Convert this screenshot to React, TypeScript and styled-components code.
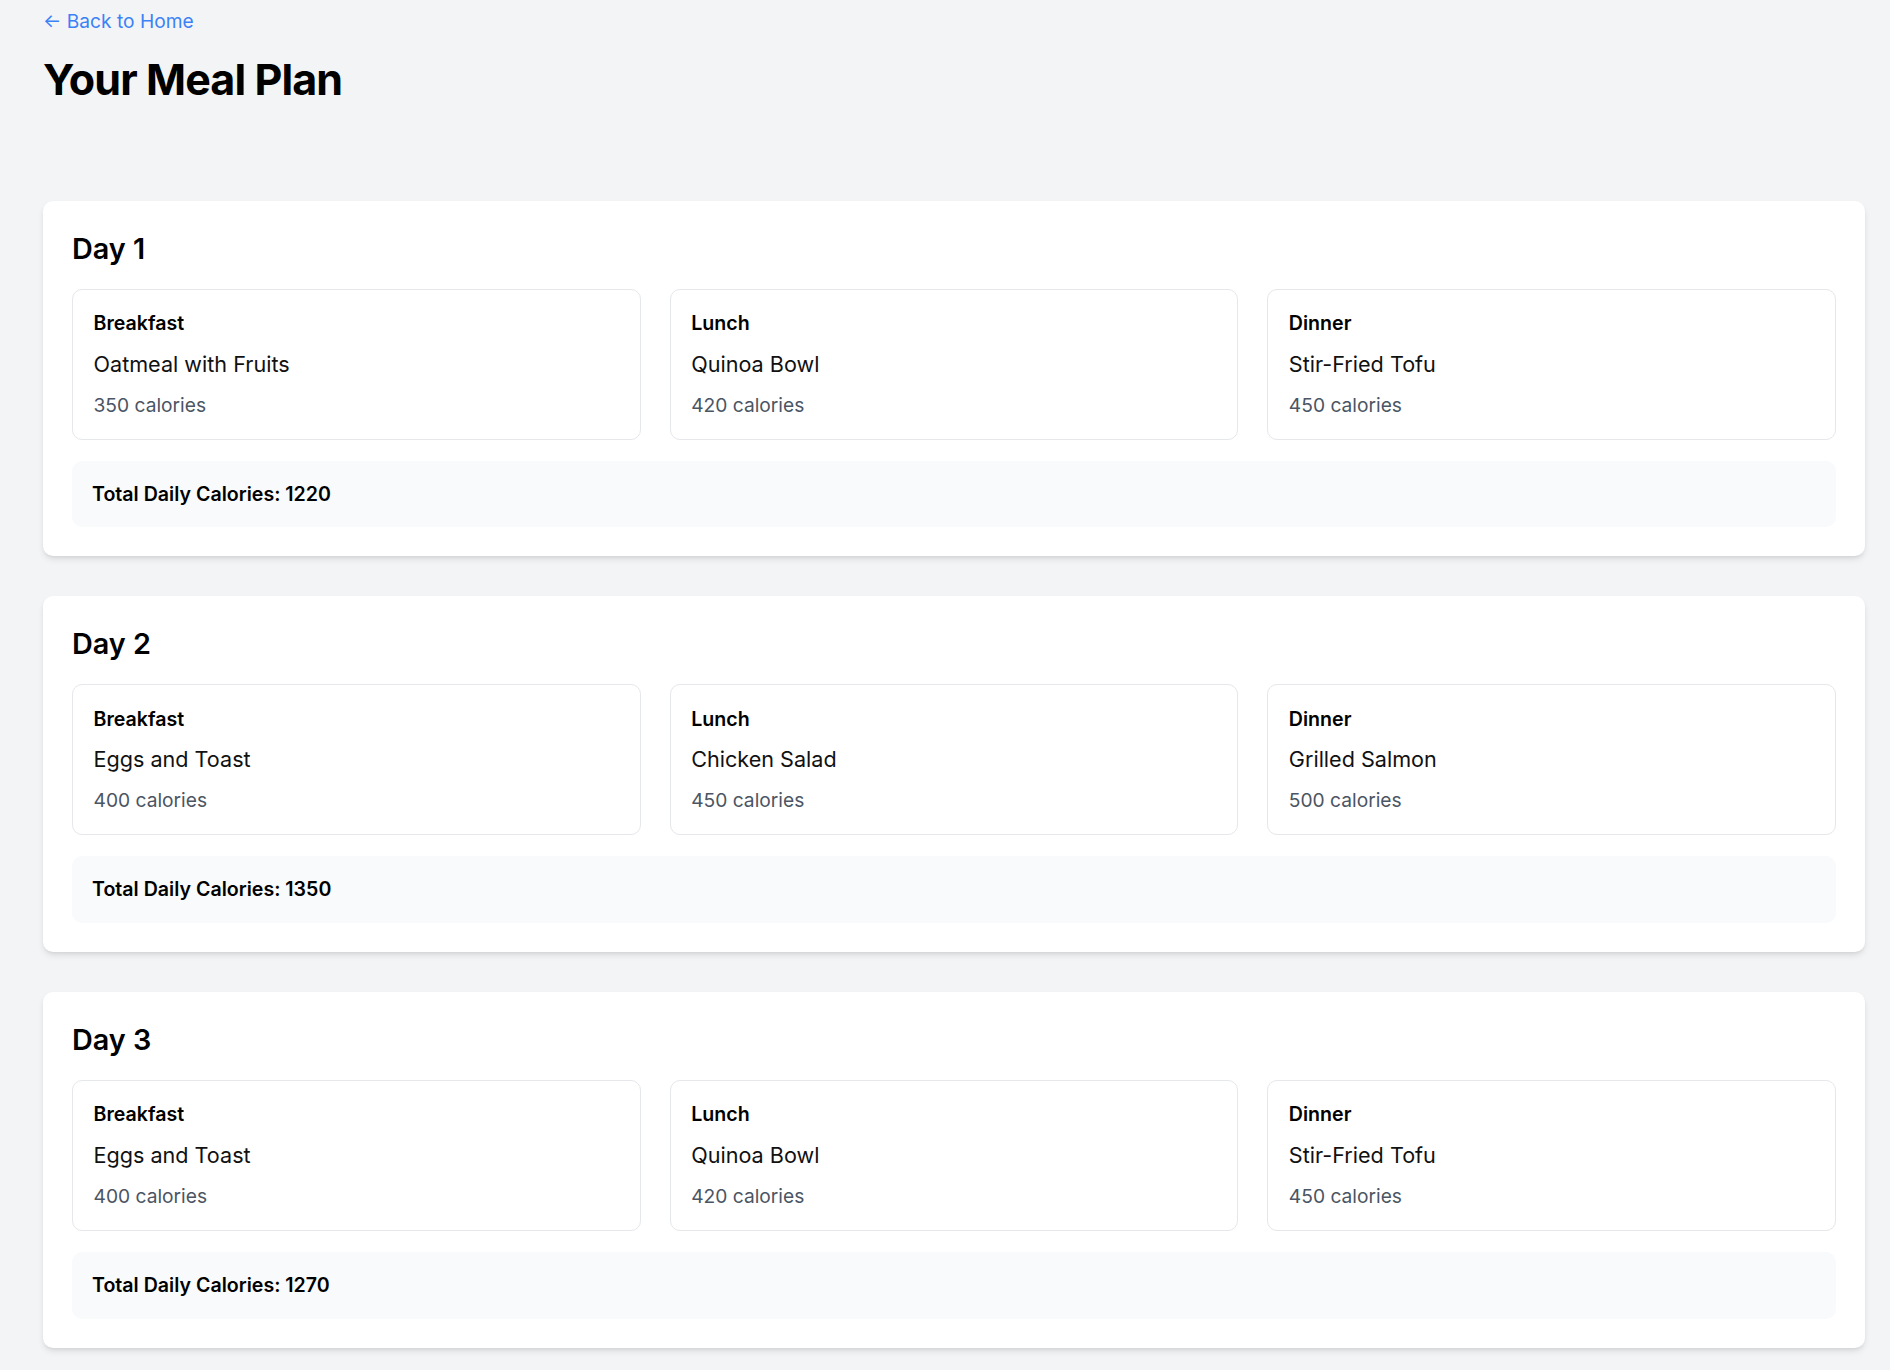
import styled, { createGlobalStyle } from 'styled-components'

const GlobalStyle = createGlobalStyle`
    html, body {
        margin: 0;
        padding: 0;
        background: #f3f4f6;
    }
    body {
        font-family: Inter, "Noto Sans", "Liberation Sans", sans-serif;
        color: #111;
        -webkit-font-smoothing: antialiased;
    }
`

interface Meal {
    type: string
    name: string
    calories: number
}

interface Day {
    day: number
    meals: Meal[]
}

const plan: Day[] = [
    {
        day: 1,
        meals: [
            { type: 'Breakfast', name: 'Oatmeal with Fruits', calories: 350 },
            { type: 'Lunch', name: 'Quinoa Bowl', calories: 420 },
            { type: 'Dinner', name: 'Stir-Fried Tofu', calories: 450 },
        ],
    },
    {
        day: 2,
        meals: [
            { type: 'Breakfast', name: 'Eggs and Toast', calories: 400 },
            { type: 'Lunch', name: 'Chicken Salad', calories: 450 },
            { type: 'Dinner', name: 'Grilled Salmon', calories: 500 },
        ],
    },
    {
        day: 3,
        meals: [
            { type: 'Breakfast', name: 'Eggs and Toast', calories: 400 },
            { type: 'Lunch', name: 'Quinoa Bowl', calories: 420 },
            { type: 'Dinner', name: 'Stir-Fried Tofu', calories: 450 },
        ],
    },
]

const App = () => {
    return (
        <>
            <GlobalStyle />
            <Page>
                <BackLink href="#">← Back to Home</BackLink>
                <Title>Your Meal Plan</Title>

                <DayList>
                    {plan.map((d) => (
                        <DayCard key={d.day}>
                            <DayTitle>Day {d.day}</DayTitle>
                            <MealGrid>
                                {d.meals.map((m) => (
                                    <MealBox key={m.type}>
                                        <MealType>{m.type}</MealType>
                                        <MealName>{m.name}</MealName>
                                        <MealCalories>{m.calories} calories</MealCalories>
                                    </MealBox>
                                ))}
                            </MealGrid>
                            <TotalBar>
                                Total Daily Calories: {d.meals.reduce((s, m) => s + m.calories, 0)}
                            </TotalBar>
                        </DayCard>
                    ))}
                </DayList>
            </Page>
        </>
    )
}

// styled-component
const Page = styled.main`
    padding : 7px 25px 22px 43px;
    border-left : 3px solid #f0f1f3;
    margin-left : -3px;
`

const BackLink = styled.a`
    display : inline-block;
    font-size : 19.2px;
    line-height : 28.8px;
    color : #3b82f6;
    text-decoration : none;
`

const Title = styled.h1`
    margin : 19px 0 0;
    font-size : 43px;
    line-height : 48px;
    font-weight : 700;
    letter-spacing : -0.9px;
    color : #000;
`

const DayList = styled.div`
    display : flex;
    flex-direction : column;
    gap : 40px;
    margin-top : 98px;
`

const DayCard = styled.section`
    background : #fff;
    border-radius : 10px;
    padding : 29px 29px 29px;
    box-shadow : 0 4px 7px -1px rgba(0, 0, 0, 0.1), 0 2px 4px -2px rgba(0, 0, 0, 0.1);
`

const DayTitle = styled.h2`
    margin : 0 0 20.5px;
    font-size : 28.8px;
    line-height : 38.4px;
    font-weight : 600;
    color : #000;
`

const MealGrid = styled.div`
    display : grid;
    grid-template-columns : repeat(3, 1fr);
    gap : 29px;
`

const MealBox = styled.div`
    border : 1px solid #e5e7eb;
    border-radius : 10px;
    padding : 19.5px 20.5px 19px;
`

const MealType = styled.h3`
    margin : 0 0 9.6px;
    font-size : 19.6px;
    line-height : 28.8px;
    font-weight : 600;
    color : #000;
`

const MealName = styled.p`
    margin : 0 0 9.6px;
    font-size : 21.6px;
    line-height : 33.6px;
    color : #111;
`

const MealCalories = styled.p`
    margin : 0;
    font-size : 19.2px;
    line-height : 28.8px;
    color : #4b5563;
`

const TotalBar = styled.div`
    margin-top : 21px;
    background : #f9fafb;
    border-radius : 10px;
    padding : 19px 20px;
    font-size : 19.6px;
    line-height : 28.8px;
    font-weight : 600;
    color : #000;
`

export default App
